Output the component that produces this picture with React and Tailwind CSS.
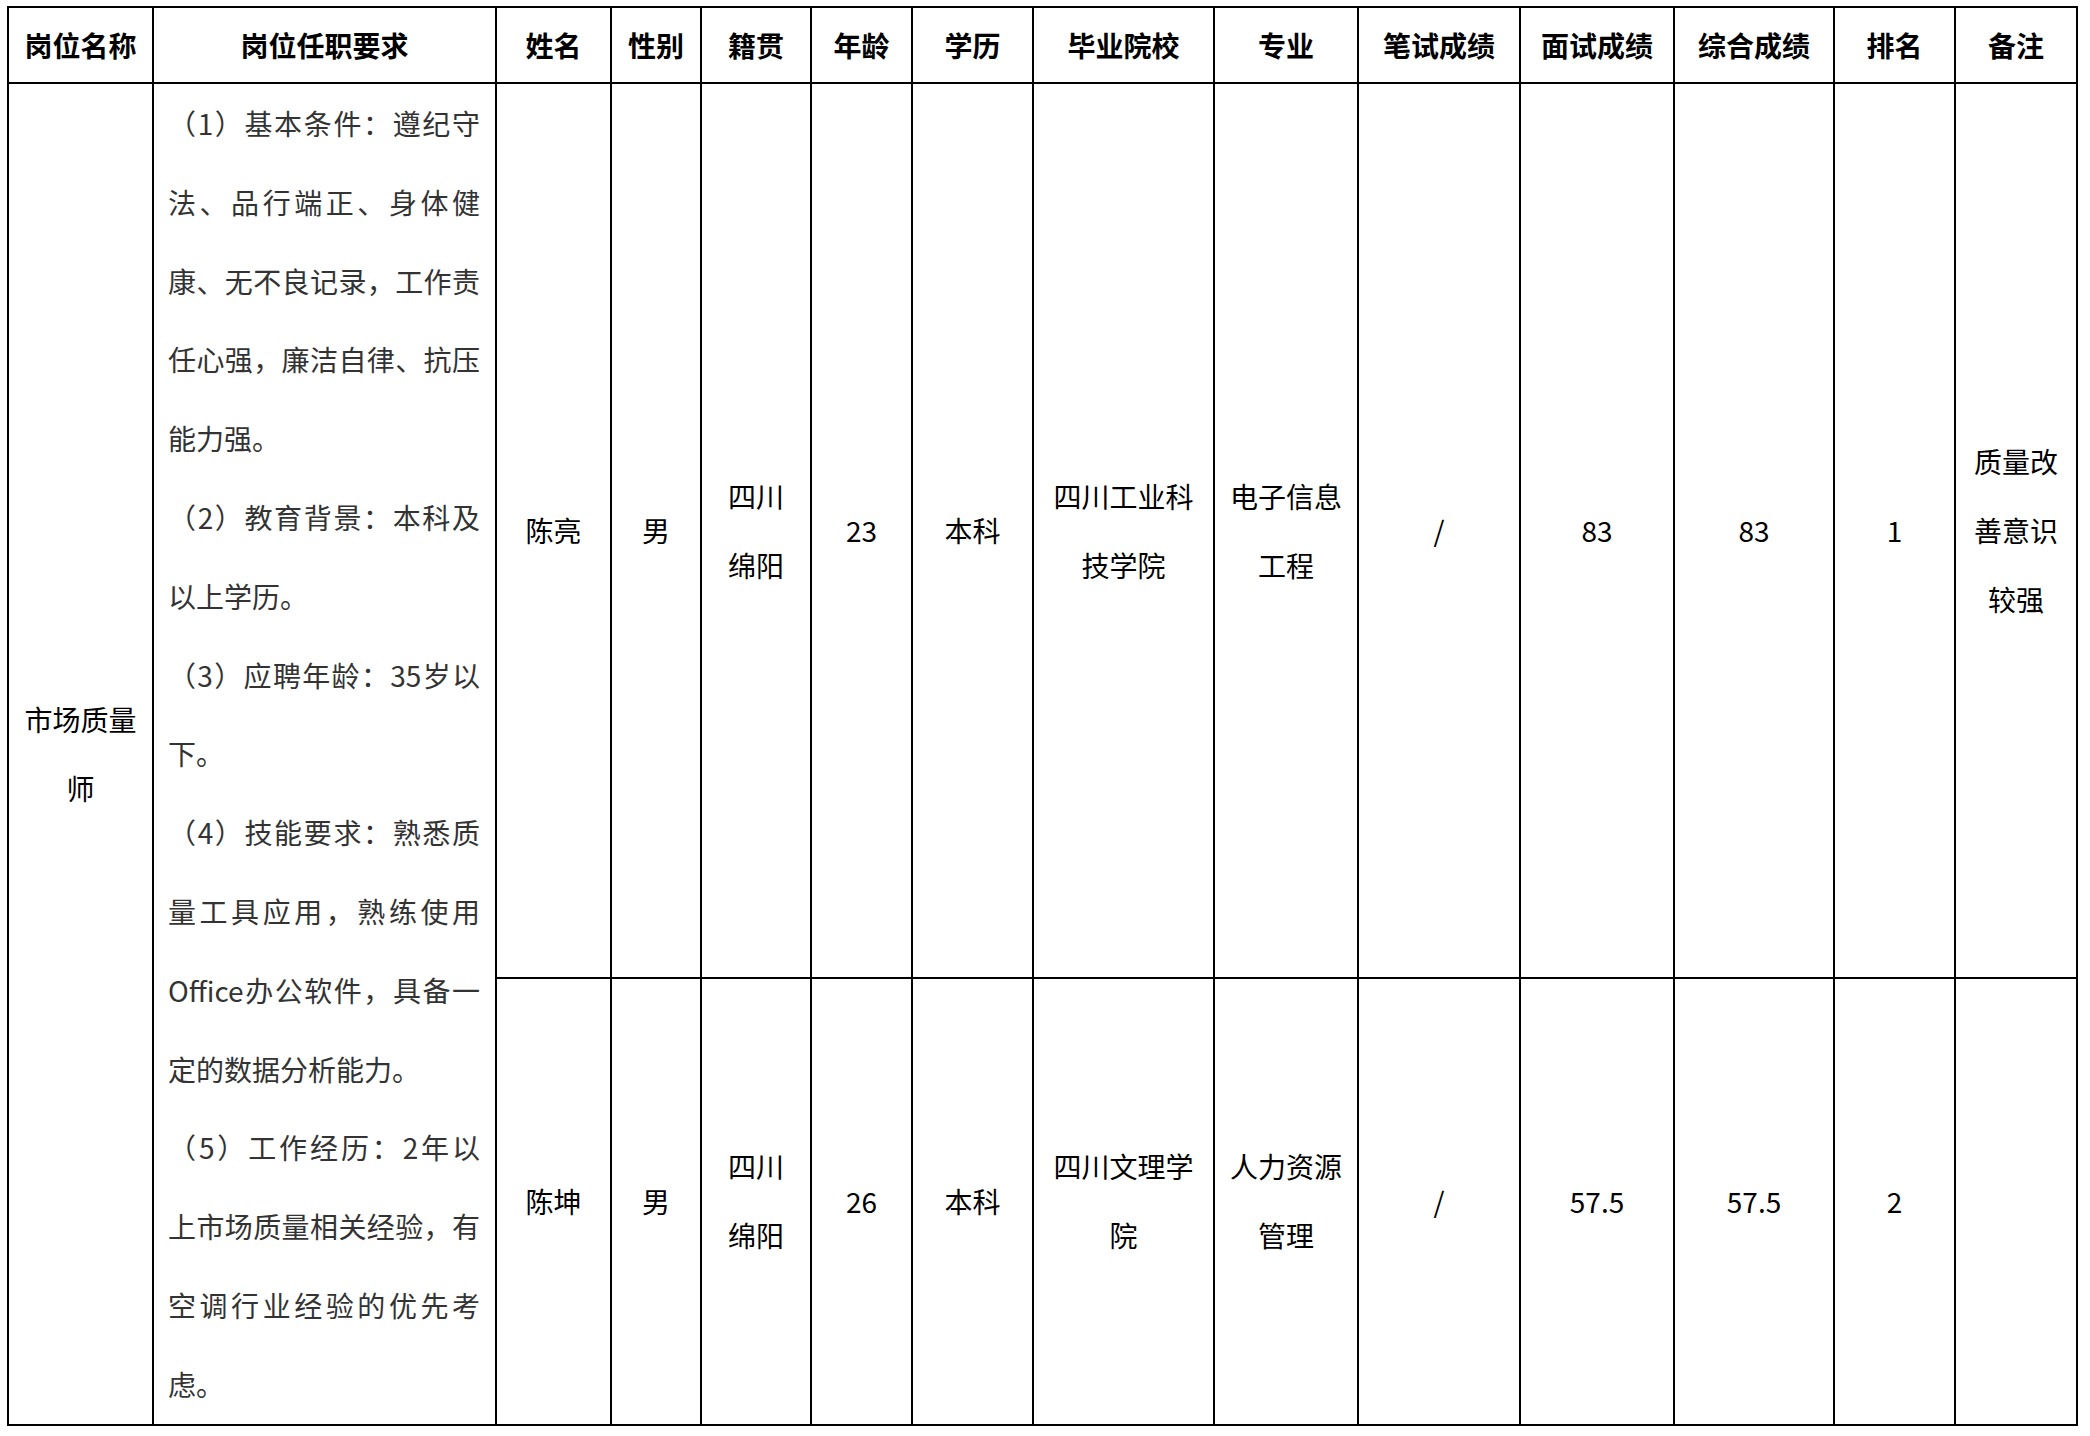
import React from "react";

const headers = ["岗位名称","岗位任职要求","姓名","性别","籍贯","年龄","学历","毕业院校","专业","笔试成绩","面试成绩","综合成绩","排名","备注"];
const widths = [145,343,115,90,110,101,121,181,144,162,154,160,121,122];

const reqLines = [
  ["（1）基本条件：遵纪守", true],
  ["法、品行端正、身体健", true],
  ["康、无不良记录，工作责", true],
  ["任心强，廉洁自律、抗压", true],
  ["能力强。", false],
  ["（2）教育背景：本科及", true],
  ["以上学历。", false],
  ["（3）应聘年龄：35岁以", true],
  ["下。", false],
  ["（4）技能要求：熟悉质", true],
  ["量工具应用，熟练使用", true],
  ["Office办公软件，具备一", true],
  ["定的数据分析能力。", false],
  ["（5）工作经历：2年以", true],
  ["上市场质量相关经验，有", true],
  ["空调行业经验的优先考", true],
  ["虑。", false],
];

const rows = [
  { h: "h-[894px]", cells: [["陈亮"],["男"],["四川","绵阳"],["23"],["本科"],["四川工业科","技学院"],["电子信息","工程"],["/"],["83"],["83"],["1"],["质量改","善意识","较强"]] },
  { h: "h-[446px]", cells: [["陈坤"],["男"],["四川","绵阳"],["26"],["本科"],["四川文理学","院"],["人力资源","管理"],["/"],["57.5"],["57.5"],["2"],[""]] },
];

function Lines({ lines }) {
  return (
    <div className="leading-[69px]">
      {lines.map((l, i) => (
        <div key={i}>{l || "\u00a0"}</div>
      ))}
    </div>
  );
}

export default function App() {
  return (
    <div className="w-[2090px] h-[1436px] bg-white pt-[6px] pl-[7px] font-['Noto_Sans_CJK_SC',sans-serif] text-[28px] text-black">
      <table className="table-fixed border-collapse border-2 border-black w-[2071px]">
        <colgroup>
          {widths.map((w, i) => (
            <col key={i} style={{ width: w }} />
          ))}
        </colgroup>
        <thead>
          <tr className="h-[76px]">
            {headers.map((h, i) => (
              <th key={i} className="border-2 border-black p-0 text-center align-middle font-bold leading-none">
                {h}
              </th>
            ))}
          </tr>
        </thead>
        <tbody>
          {rows.map((r, ri) => (
            <tr key={ri} className={r.h}>
              {ri === 0 && (
                <>
                  <td rowSpan={2} className="border-2 border-black p-0 text-center align-middle">
                    <Lines lines={["市场质量", "师"]} />
                  </td>
                  <td rowSpan={2} className="border-2 border-black pl-[14px] pr-[15px] py-0 align-top text-[#333]">
                    <div className="leading-[78.8px]">
                      {reqLines.map(([t, j], i) => (
                        <div key={i} className={j ? "text-justify [text-align-last:justify] whitespace-nowrap" : "text-left whitespace-nowrap"}>
                          {t}
                        </div>
                      ))}
                    </div>
                  </td>
                </>
              )}
              {r.cells.map((c, ci) => (
                <td key={ci} className="border-2 border-black p-0 text-center align-middle">
                  <Lines lines={c} />
                </td>
              ))}
            </tr>
          ))}
        </tbody>
      </table>
    </div>
  );
}
